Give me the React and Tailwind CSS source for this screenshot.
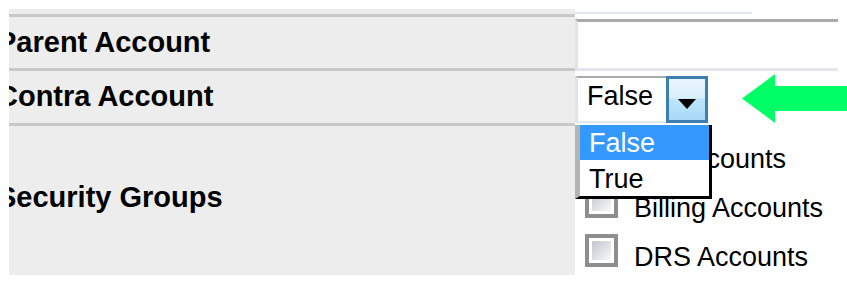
import React from 'react'

const font = "font-['Liberation_Sans',Arial,sans-serif]"

function Label({ children, pad }) {
  return (
    <div className={pad}>
      <div className="-ml-[12px] text-[29px] leading-none font-bold text-black whitespace-nowrap">{children}</div>
    </div>
  )
}

function Check({ label }) {
  return (
    <div className="flex items-start h-[33px]">
      <div className="ml-[10px] w-[33px] h-[33px] shrink-0 border-[4px] border-[#8e8e8e] bg-white p-[3px]">
        <div className="w-full h-full bg-[linear-gradient(135deg,#c4c6cf,#f8f8f8)]" />
      </div>
      <div className="ml-[16px] pt-[10px] text-[27px] leading-none text-black whitespace-nowrap">{label}</div>
    </div>
  )
}

export default function App() {
  return (
    <div className={`relative w-[847px] h-[289px] bg-white overflow-hidden ${font}`}>
      <div className="flex">
        {/* labels column */}
        <div className="ml-[9px] mt-[9px] w-[566px] h-[266px] bg-[#ededed] overflow-hidden flex flex-col">
          <div className="h-[5px]" />
          <div className="h-[3px] bg-[#c8c8c8]" />
          <div className="h-[51px]">
            <Label pad="pt-[11px]">Parent Account</Label>
          </div>
          <div className="h-[3px] bg-[#c8c8c8]" />
          <div className="h-[52px]">
            <Label pad="pt-[11px]">Contra Account</Label>
          </div>
          <div className="h-[3px] bg-[#c8c8c8]" />
          <div className="flex-1">
            <Label pad="pt-[57px]">Security Groups</Label>
          </div>
        </div>

        {/* fields column */}
        <div className="w-[272px] flex flex-col">
          <div className="h-[14px] w-[177px] border-b-2 border-[#e3e6ec]" />
          <div className="mt-[5px] h-[52px] w-[263px] border-t-[3px] border-t-[#aaaaaa] border-l-[3px] border-l-[#e2e2ea] border-b-[3px] border-b-[#e3e6ec] bg-white" />
          <div className="mt-[5px] h-[47px] flex">
            <div className="w-[91px] h-full border-t-2 border-t-[#aaaaaa] border-l-[3px] border-l-[#e2e2ea] border-b-2 border-b-[#e3e6ec] bg-white pl-[9px] pt-[5px]">
              <div className="text-[27px] leading-none text-black">False</div>
            </div>
            <div className="w-[42px] h-full border-[3px] border-[#3c7fb1] bg-[linear-gradient(to_bottom,#eaf6fd_0%,#d9f0fc_45%,#bee6fd_50%,#a7d9f5_100%)] flex items-center justify-center">
              <svg width="18" height="10" viewBox="0 0 18 10" className="mt-[8px]">
                <polygon points="0,0 18,0 9,10" fill="#000" />
              </svg>
            </div>
          </div>
          <div className="mt-[13px] flex flex-col gap-[16px]">
            <Check label="GL Accounts" />
            <Check label="Billing Accounts" />
            <Check label="DRS Accounts" />
          </div>
        </div>
      </div>

      {/* open dropdown list */}
      <div className="absolute left-[575px] top-[125px] w-[137px] h-[74px] bg-white border-l-[5px] border-l-[#b4b4b4] border-r-[3px] border-r-black border-b-[3px] border-b-black">
        <div className="h-[35px] bg-[#3399ff] pl-[9px] pt-[5px] text-[27px] leading-none text-white">False</div>
        <div className="h-[36px] pl-[9px] pt-[6px] text-[27px] leading-none text-black">True</div>
      </div>

      {/* annotation arrow */}
      <svg className="absolute left-[742px] top-[74px]" width="105" height="49" viewBox="0 0 105 49">
        <polygon points="0,24.5 33,0 33,12 105,12 105,37 33,37 33,49" fill="#00ff66" />
      </svg>
    </div>
  )
}
